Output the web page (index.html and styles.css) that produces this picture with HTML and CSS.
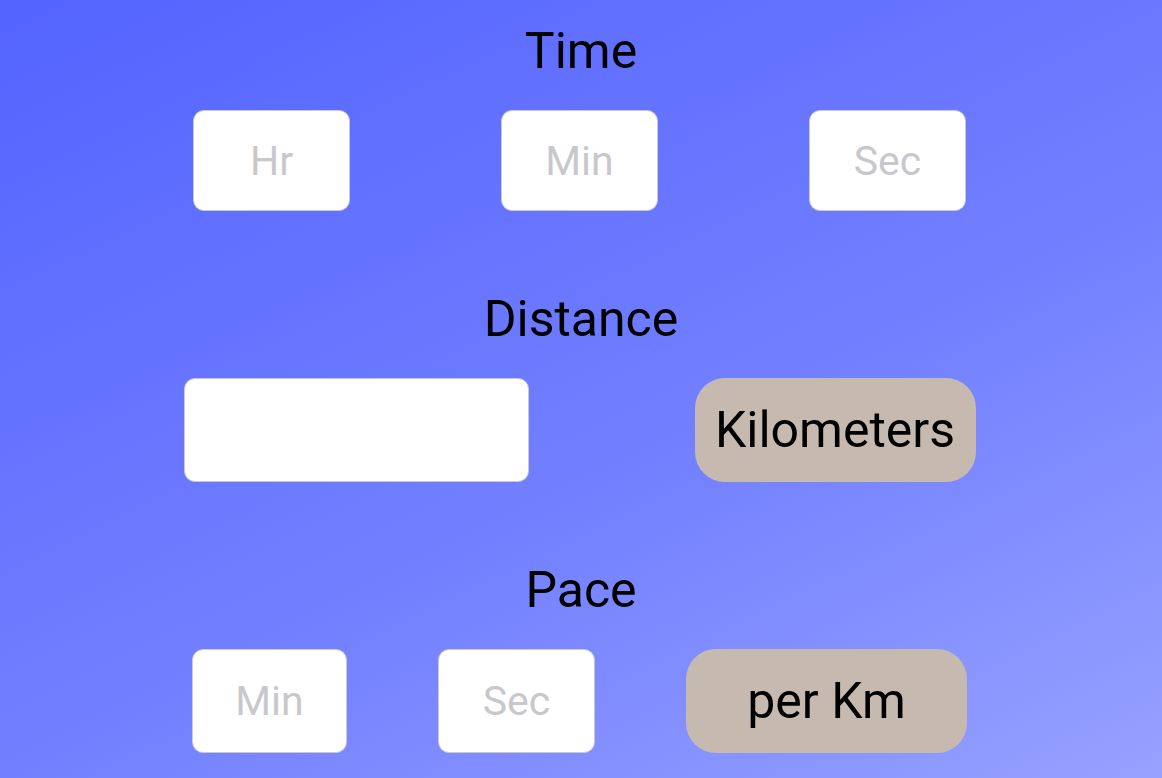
FILE: index.html
```html
<!DOCTYPE html>
<html lang="en">
<head>
<meta charset="utf-8">
<title>Pace Calculator</title>
<link rel="stylesheet" href="styles.css">
</head>
<body>
<main class="calc">
  <section class="section">
    <h2 class="label">Time</h2>
    <div class="row row-time">
      <input class="field field-sm" type="text" placeholder="Hr">
      <input class="field field-sm" type="text" placeholder="Min">
      <input class="field field-sm" type="text" placeholder="Sec">
    </div>
  </section>
  <section class="section">
    <h2 class="label">Distance</h2>
    <div class="row row-distance">
      <input class="field field-wide" type="text">
      <button class="unit" type="button">Kilometers</button>
    </div>
  </section>
  <section class="section">
    <h2 class="label">Pace</h2>
    <div class="row row-pace">
      <input class="field field-pace-min" type="text" placeholder="Min">
      <input class="field field-pace-sec" type="text" placeholder="Sec">
      <button class="unit" type="button">per Km</button>
    </div>
  </section>
</main>
</body>
</html>
```

FILE: styles.css
```css
html, body {
  margin: 0;
  padding: 0;
  height: 100%;
}

body {
  background: linear-gradient(154deg, #5364ff 0%, #6a78ff 42%, #7280ff 58%, #97a1ff 100%);
  font-family: Roboto, "Liberation Sans", sans-serif;
  color: #000;
  overflow: hidden;
}

.calc {
  display: flex;
  flex-direction: column;
  gap: 78px;
  padding-top: 21px;
}

.section {
  display: flex;
  flex-direction: column;
  align-items: center;
  gap: 29px;
}

.label {
  margin: 0;
  font-size: 50px;
  font-weight: 400;
  line-height: 60px;
  height: 60px;
  text-align: center;
}

.row {
  display: flex;
  justify-content: center;
  align-items: stretch;
  padding-right: 3px;
}

.row-time {
  gap: 151px;
  height: 101px;
}

.row-distance {
  gap: 166px;
  height: 104px;
}

.row-pace {
  gap: 91px;
  height: 104px;
}

.field {
  box-sizing: border-box;
  margin: 0;
  padding: 0;
  height: 100%;
  background: #fff;
  border: 1px solid #c9c9cf;
  border-radius: 11px;
  font-family: Roboto, "Liberation Sans", sans-serif;
  font-size: 41px;
  text-align: center;
  color: #000;
  outline: none;
}

.field::placeholder {
  color: #c8c8cc;
  opacity: 1;
}

.field-sm {
  width: 157px;
}

.field-wide {
  width: 345px;
}

.field-pace-min {
  width: 155px;
}

.field-pace-sec {
  width: 157px;
}

.unit {
  box-sizing: border-box;
  width: 281px;
  height: 100%;
  margin: 0;
  padding: 0;
  border: none;
  border-radius: 30px;
  background: #c6bab0;
  color: #000;
  font-family: Roboto, "Liberation Sans", sans-serif;
  font-size: 50px;
  font-weight: 400;
}
```
